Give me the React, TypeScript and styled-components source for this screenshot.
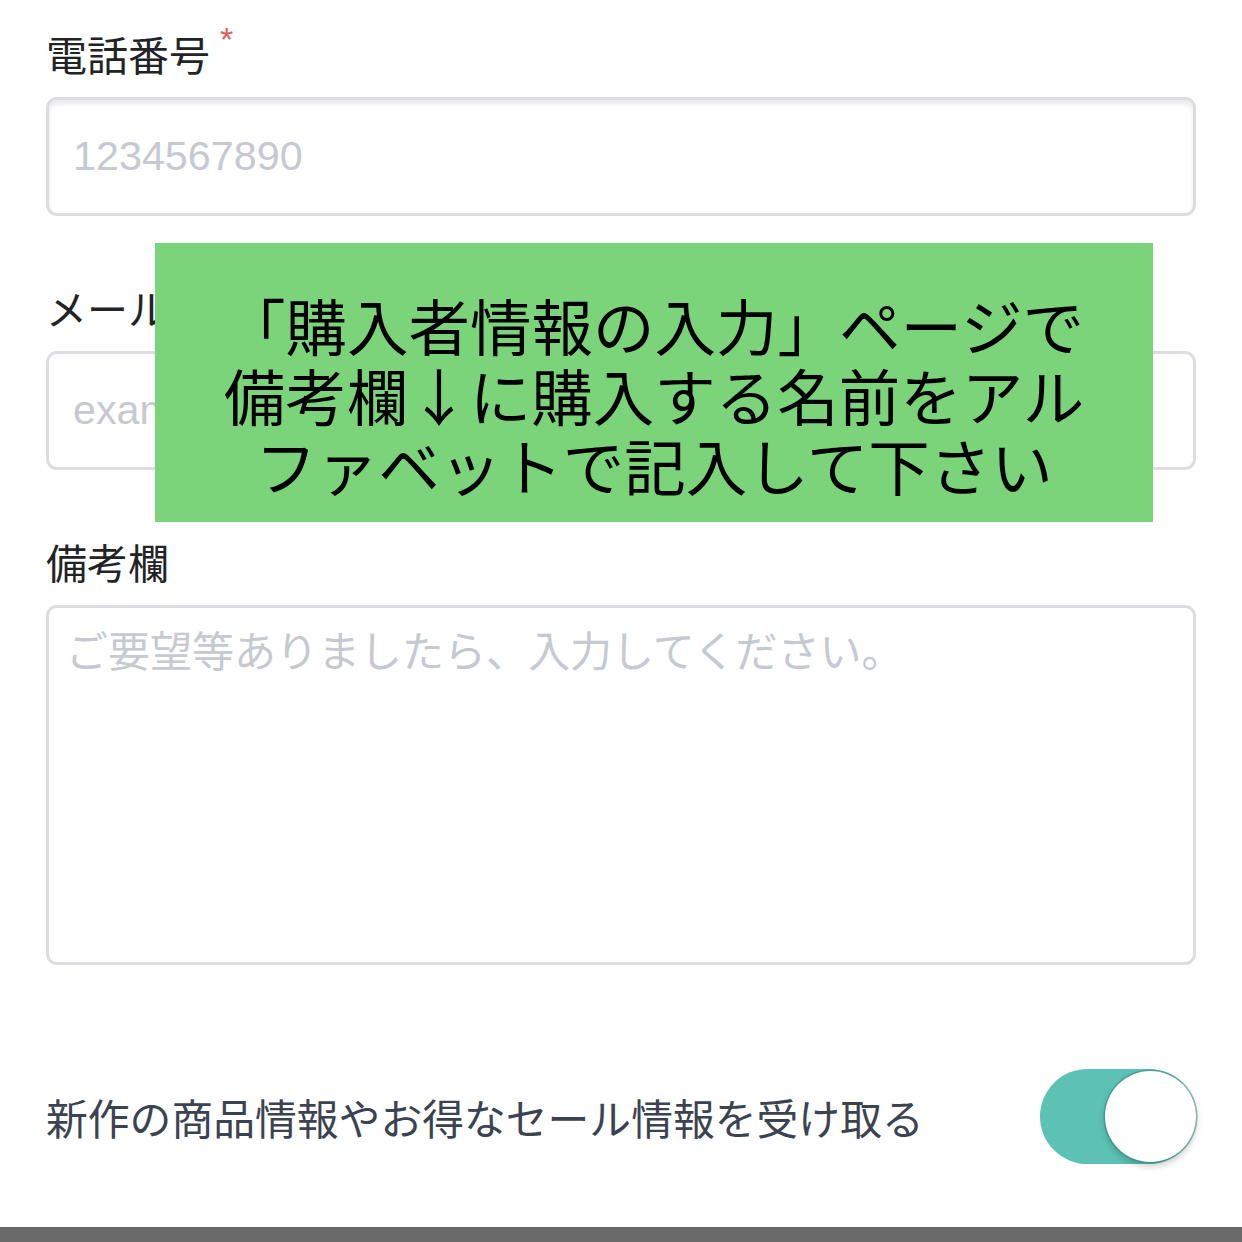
import React from "react"
import styled, { createGlobalStyle } from "styled-components"

const GlobalStyle = createGlobalStyle`
    html, body {
        margin: 0;
        padding: 0;
        background: #ffffff;
    }
    body {
        font-family: "Noto Sans CJK JP", "Noto Sans", sans-serif;
    }
`

const Page = styled.div`
    position: relative;
    width: 1242px;
    height: 1242px;
    display: flex;
    flex-direction: column;
    overflow: hidden;
    background: #ffffff;
`

const Form = styled.form`
    flex: 1;
    display: flex;
    flex-direction: column;
    gap: 67px;
    padding: 29px 46px 0;
`

const Field = styled.div`
    display: flex;
    flex-direction: column;
    gap: 20px;
`

const Label = styled.label`
    font-size: 41px;
    line-height: 48px;
    color: #222325;
`

const Required = styled.span`
    display: inline-block;
    margin-left: 10px;
    font-family: "Liberation Sans", sans-serif;
    font-size: 34px;
    line-height: 20px;
    vertical-align: top;
    color: #d9625b;
`

const TextInput = styled.input<{ $inset?: boolean }>`
    box-sizing: border-box;
    width: 100%;
    height: 119px;
    padding: 0 24px;
    border: 3px solid #dcdde2;
    border-radius: 11px;
    background: #ffffff;
    box-shadow: ${p => (p.$inset ? "inset 0 4px 5px rgba(0, 0, 0, 0.09)" : "none")};
    font-family: "Liberation Sans", "Noto Sans CJK JP", sans-serif;
    font-size: 41.3px;
    outline: none;

    &::placeholder {
        color: #c6c9d0;
    }
`

const TextArea = styled.textarea`
    box-sizing: border-box;
    width: 100%;
    height: 360px;
    padding: 12px 17px;
    border: 3px solid #dcdde2;
    border-radius: 11px;
    resize: none;
    font-family: "Noto Sans CJK JP", sans-serif;
    font-size: 42px;
    line-height: 58px;
    outline: none;

    &::placeholder {
        color: #c6c9d0;
    }
`

const ToggleRow = styled.div`
    display: flex;
    align-items: center;
    justify-content: space-between;
    margin-top: 37px;
`

const ToggleLabel = styled.span`
    font-size: 41.8px;
    line-height: 48px;
    color: #3c4350;
`

const Track = styled.div<{ $on: boolean }>`
    position: relative;
    width: 156px;
    height: 95px;
    border-radius: 48px;
    background: ${p => (p.$on ? "#5bc2b4" : "#dcdde2")};
`

const Knob = styled.div<{ $on: boolean }>`
    position: absolute;
    top: 2px;
    ${p => (p.$on ? "right: 0;" : "left: 0;")}
    width: 91px;
    height: 91px;
    border-radius: 50%;
    background: #ffffff;
    box-shadow: 0 0 0 1.5px rgba(60, 140, 128, 0.6), 0 4px 7px rgba(0, 0, 0, 0.22);
`

const BottomBar = styled.div`
    height: 15px;
    background: #6a6a6a;
`

const Notice = styled.div`
    position: absolute;
    left: 155px;
    top: 243px;
    width: 998px;
    height: 279px;
    box-sizing: border-box;
    padding-top: 47px;
    background: #7bd47a;
    text-align: center;
    font-size: 61.5px;
    line-height: 70px;
    color: #000000;
`

const App = () => (
    <Page>
        <GlobalStyle />
        <Form onSubmit={e => e.preventDefault()}>
            <Field>
                <Label>
                    電話番号<Required>*</Required>
                </Label>
                <TextInput $inset type="tel" placeholder="1234567890" />
            </Field>
            <Field>
                <Label>メールアドレス</Label>
                <TextInput type="email" placeholder="example@example.com" />
            </Field>
            <Field>
                <Label>備考欄</Label>
                <TextArea placeholder="ご要望等ありましたら、入力してください。" />
            </Field>
            <ToggleRow>
                <ToggleLabel>新作の商品情報やお得なセール情報を受け取る</ToggleLabel>
                <Track $on>
                    <Knob $on />
                </Track>
            </ToggleRow>
        </Form>
        <BottomBar />
        <Notice>
            「購入者情報の入力」ページで
            <br />
            備考欄↓に購入する名前をアル
            <br />
            ファベットで記入して下さい
        </Notice>
    </Page>
)

export default App
